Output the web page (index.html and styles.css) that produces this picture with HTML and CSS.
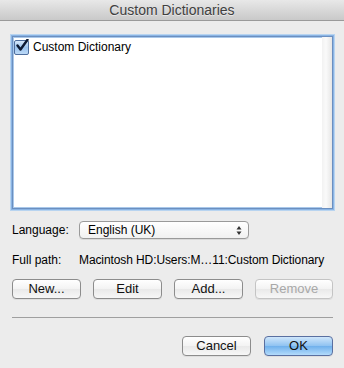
FILE: index.html
```html
<html>
    <head>
        <link rel="stylesheet" href="styles.css">
        <title>Custom Dictionaries</title>
    </head>
    <body>
        <div class="titlebar">Custom Dictionaries</div>
        <div class="sheet">
            <div class="listbox">
                <div class="list">
                    <label class="row">
                        <span class="check">
                            <svg width="14" height="14" viewBox="0 0 14 14">
                                <path d="M2.5 6.5 L5.5 10.5 L12.5 0.8" fill="none" stroke="#0d1a33" stroke-width="2.4" stroke-linejoin="round" stroke-linecap="round"/>
                            </svg>
                        </span>
                        Custom Dictionary
                    </label>
                </div>
                <div class="track"></div>
            </div>

            <div class="field">
                <span class="label">Language:</span>
                <div class="popup">
                    <span>English (UK)</span>
                    <svg width="6" height="9" viewBox="0 0 6 9">
                        <path d="M3 0 L5.5 3.5 L0.5 3.5 Z M3 9 L5.5 5.5 L0.5 5.5 Z" fill="#333"/>
                    </svg>
                </div>
            </div>

            <div class="field">
                <span class="label">Full path:</span>
                <span class="value">Macintosh HD:Users:M…11:Custom Dictionary</span>
            </div>

            <div class="buttons">
                <a class="btn">New...</a>
                <a class="btn">Edit</a>
                <a class="btn">Add...</a>
                <a class="btn disabled">Remove</a>
            </div>

            <div class="separator"></div>

            <div class="footer">
                <a class="btn">Cancel</a>
                <a class="btn default">OK</a>
            </div>
        </div>
    </body>
</html>
```

FILE: styles.css
```css
html, body {margin: 0; padding: 0;}
body {font-family: "Liberation Sans", Arial, sans-serif; font-size: 12px; color: #000; background: #ececec; width: 344px; height: 368px; overflow: hidden;}

.titlebar {
    height: 20px;
    line-height: 21px;
    text-align: center;
    font-size: 14px;
    color: #404040;
    background: linear-gradient(#e8e8e8, #c9c9c9);
    border-bottom: 1px solid #9a9a9a;
    text-shadow: 0 1px 0 rgba(255,255,255,0.5);
}

.sheet {padding: 0 11px 0 12px;}

.listbox {
    display: flex;
    margin-top: 15px;
    height: 171px;
    background: #fff;
    border: 1px solid #6b8fc0;
    box-shadow: 0 0 0 1px #8ab4e4, 0 0 0 2px #b8d4f0, inset 0 0 0 1px #a9c8ea;
}
.list {flex: 1; padding: 2px 1px;}
.track {width: 10px; background: linear-gradient(90deg, #f2f2f2, #fafafa 40%, #e6e6e6);}

.row {display: flex; align-items: center; height: 16px; gap: 4px;}
.check {
    width: 13px; height: 13px;
    border: 1px solid #4f6f9e;
    border-radius: 2px;
    background: linear-gradient(#d8e9fb, #9cc4ef 50%, #bcd9f6);
    position: relative;
}
.check svg {position: absolute; left: 0; top: -2px;}

.field {display: flex; align-items: center; margin-top: 12px; height: 18px; white-space: nowrap;}
.label {width: 67px;}
.value {letter-spacing: -0.1px;}
.popup {
    display: flex; align-items: center; justify-content: space-between;
    box-sizing: border-box;
    width: 170px; height: 18px;
    padding: 0 6px 0 8px;
    border: 1px solid #9a9a9a;
    border-radius: 4px;
    background: linear-gradient(#ffffff, #f1f1f1);
    box-shadow: 0 1px 0 rgba(0,0,0,0.08);
}

.buttons {display: flex; gap: 12px; margin-top: 10px;}
.btn {
    display: inline-block;
    box-sizing: border-box;
    width: 69px; height: 20px;
    line-height: 18px;
    text-align: center;
    font-size: 13px;
    color: #111;
    border: 1px solid #8c8c8c;
    border-radius: 4px;
    background: linear-gradient(#ffffff, #f3f3f3 50%, #e9e9e9 51%, #f7f7f7);
    box-shadow: 0 1px 0 rgba(0,0,0,0.06);
}
.btn.disabled {width: 78px; color: #a8a8a8; border-color: #c4c4c4;}

.separator {height: 1px; background: #9f9f9f; margin-top: 18px;}

.footer {display: flex; justify-content: flex-end; gap: 13px; margin-top: 18px;}
.btn.default {
    border-color: #5a6fa0;
    background: linear-gradient(#cfe6fb, #8ec2f1 50%, #6fb0ec 51%, #b3dbfb);
}
```
